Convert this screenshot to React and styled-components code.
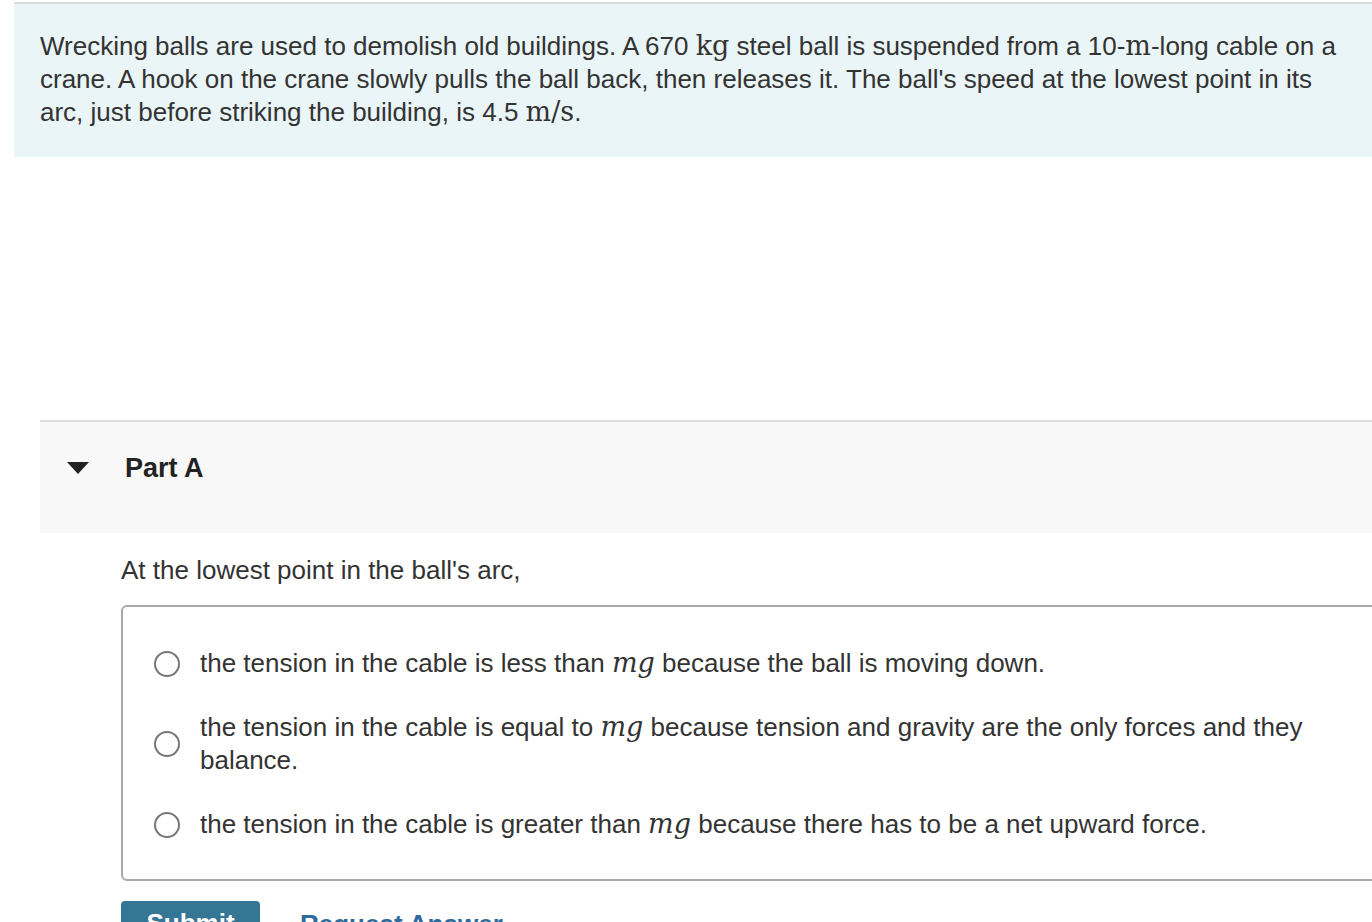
import * as React from "react"
import styled, { createGlobalStyle } from "styled-components"

const GlobalStyle = createGlobalStyle`
  html, body {
    margin: 0;
    padding: 0;
    background: #ffffff;
    overflow: hidden;
  }
  body {
    font-family: "Liberation Sans", Arial, Helvetica, sans-serif;
    color: #333333;
  }
`

const options = [
  { before: "the tension in the cable is less than", after: "because the ball is moving down." },
  {
    before: "the tension in the cable is equal to",
    after: "because tension and gravity are the only forces and they balance.",
  },
  { before: "the tension in the cable is greater than", after: "because there has to be a net upward force." },
]

const App = () => (
  <Page>
    <GlobalStyle />
    <Intro>
      <IntroText>
        Wrecking balls are used to demolish old buildings. A 670 <Unit>kg</Unit> steel ball is
        suspended from a 10-<Unit>m</Unit>-long cable on a crane. A hook on the crane slowly pulls
        the ball back, then releases it. The ball's speed at the lowest point in its arc, just
        before striking the building, is 4.5 <Unit>m/s</Unit>.
      </IntroText>
    </Intro>

    <Part>
      <PartHeader>
        <Caret />
        <PartTitle>Part A</PartTitle>
      </PartHeader>
      <PartBody>
        <Prompt>At the lowest point in the ball's arc,</Prompt>
        <Choices>
          {options.map((o, i) => (
            <Choice key={i}>
              <Radio />
              <ChoiceText>
                {o.before} <Var>mg</Var> {o.after}
              </ChoiceText>
            </Choice>
          ))}
        </Choices>
        <Actions>
          <SubmitButton>Submit</SubmitButton>
          <LinkButton>Request Answer</LinkButton>
        </Actions>
      </PartBody>
    </Part>
  </Page>
)

const Page = styled.div`
  width: 1420px;
  padding-top: 2px;
  padding-left: 14px;
`
const Intro = styled.section`
  border-top: 2px solid #dcdcdc;
  background: #eaf5f7;
  padding: 26px 26px 28px 26px;
`
const IntroText = styled.p`
  margin: 0;
  width: 1310px;
  font-size: 26px;
  line-height: 33px;
`
const Unit = styled.span`
  font-family: "DejaVu Serif", "Liberation Serif", serif;
  font-size: 27px;
  line-height: 1;
`
const Var = styled.span`
  font-family: "DejaVu Serif", "Liberation Serif", serif;
  font-style: italic;
  font-size: 27px;
  line-height: 1;
`
const Part = styled.section`
  margin-top: 263px;
  margin-left: 26px;
`
const PartHeader = styled.div`
  display: flex;
  align-items: center;
  height: 113px;
  box-sizing: border-box;
  border-top: 2px solid #dddddd;
  background: #f8f8f8;
  padding: 0 0 19px 27px;
`
const Caret = styled.span`
  width: 0;
  height: 0;
  border-left: 11px solid transparent;
  border-right: 11px solid transparent;
  border-top: 12px solid #222222;
  margin-right: 36px;
`
const PartTitle = styled.h2`
  margin: 0;
  font-size: 27px;
  font-weight: 700;
  color: #222222;
`
const PartBody = styled.div`
  padding: 21px 0 0 81px;
`
const Prompt = styled.p`
  margin: 0 0 18px;
  font-size: 26px;
  line-height: 33px;
`
const Choices = styled.div`
  display: flex;
  flex-direction: column;
  gap: 31px;
  border: 2px solid #a9a9a9;
  border-radius: 6px;
  padding: 40px 40px 38px 31px;
  background: #ffffff;
`
const Choice = styled.label`
  display: flex;
  align-items: center;
  gap: 20px;
`
const Radio = styled.span`
  flex: none;
  width: 22px;
  height: 22px;
  border: 2px solid #777777;
  border-radius: 50%;
  background: #ffffff;
`
const ChoiceText = styled.span`
  width: 1120px;
  font-size: 26px;
  line-height: 33px;
`
const Actions = styled.div`
  display: flex;
  align-items: flex-start;
  gap: 40px;
  margin-top: 20px;
`
const SubmitButton = styled.button`
  width: 139px;
  height: 44px;
  border: none;
  border-radius: 4px;
  background: #357694;
  color: #ffffff;
  font-family: inherit;
  font-size: 26px;
  font-weight: 700;
`
const LinkButton = styled.button`
  border: none;
  background: none;
  padding: 8px 0 0;
  color: #2f6b9a;
  font-family: inherit;
  font-size: 26px;
  font-weight: 700;
`

export default App
